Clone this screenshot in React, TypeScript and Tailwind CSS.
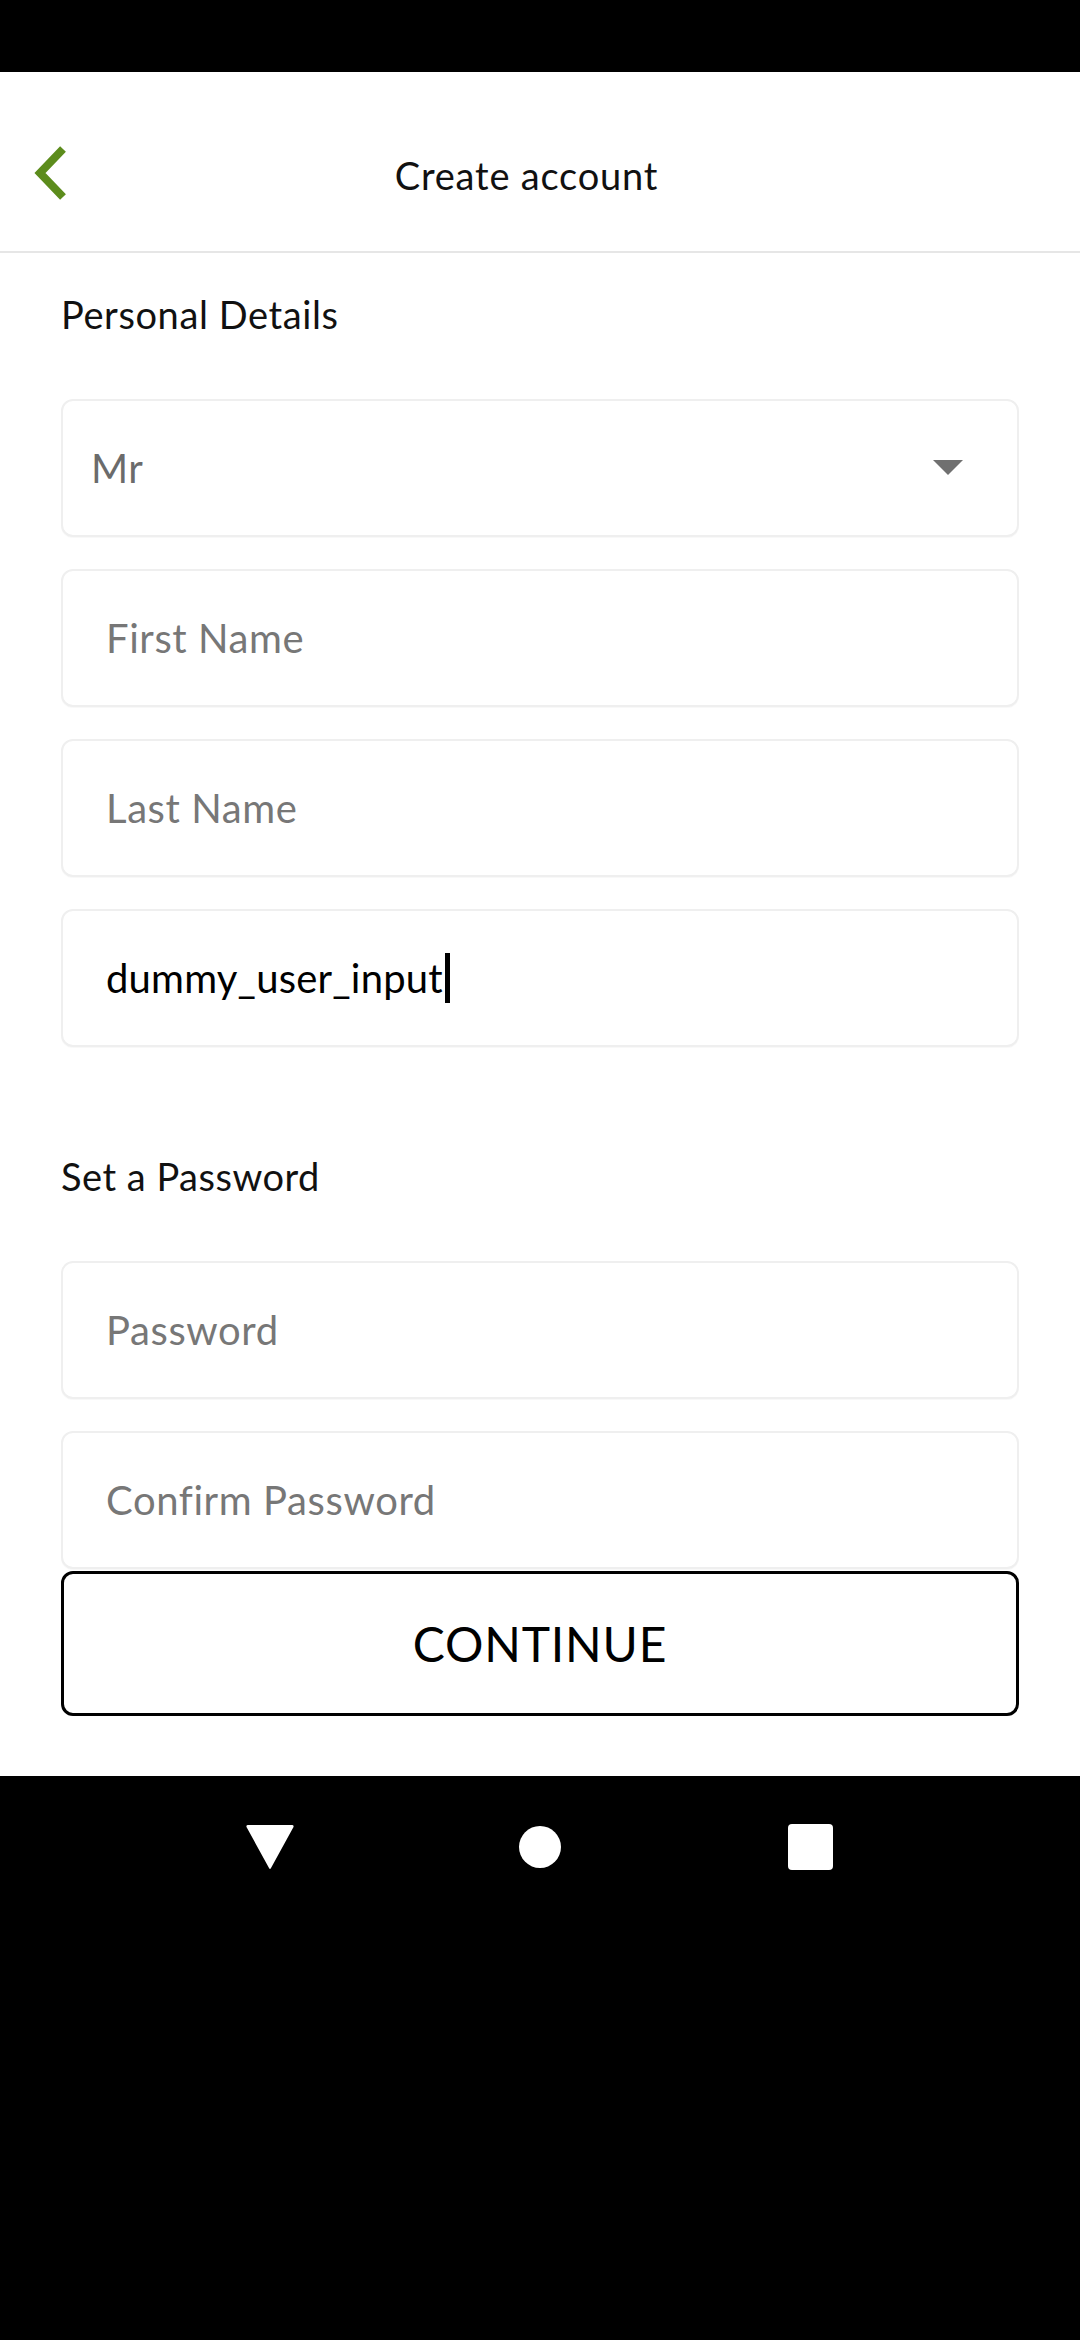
const font = { fontFamily: "Lato, 'Open Sans', sans-serif" };

function Field({ label, value, select }: { label?: string; value?: string; select?: boolean }) {
  return (
    <div className="flex h-[138px] items-center rounded-[12px] border-2 border-[#efefef] bg-white shadow-[0_1px_1px_rgba(0,0,0,0.03)]">
      {select ? (
        <>
          <span className="flex-1 pl-[28px] text-[40px] leading-none tracking-[0.3px] text-[#6b6b6b]">{label}</span>
          <svg width="30" height="16" viewBox="0 0 30 16" className="mr-[54px]">
            <path d="M0 0 L30 0 L15 15 Z" fill="#707070" />
          </svg>
        </>
      ) : value ? (
        <span className="flex items-center pl-[43px] text-[40px] leading-none tracking-[0.2px] text-black">
          {value}
          <span className="ml-[2px] inline-block h-[50px] w-[5px] bg-black" />
        </span>
      ) : (
        <span className="pl-[43px] text-[40px] leading-none tracking-[0.6px] text-[#777777]">{label}</span>
      )}
    </div>
  );
}

export default function App() {
  return (
    <div className="flex h-[2340px] w-[1080px] flex-col bg-black" style={font}>
      <div className="h-[72px] bg-black" />

      <div className="flex h-[181px] items-center border-b-2 border-[#e6e6e6] bg-white pt-[26px]">
        <div className="w-[100px] pl-[30px]">
          <svg width="44" height="60" viewBox="0 0 44 60">
            <polyline
              points="33,4 10,28 33,52"
              fill="none"
              stroke="#5c8c1c"
              strokeWidth="8"
              strokeLinejoin="miter"
            />
          </svg>
        </div>
        <h1 className="flex-1 text-center text-[38px] font-normal leading-none tracking-[0.8px] text-[#111]">
          Create account
        </h1>
        <div className="w-[127px]" />
      </div>

      <div className="flex flex-col bg-white px-[61px]">
        <h2 className="mt-[42px] text-[38px] leading-none tracking-[0.6px] text-[#111]">Personal Details</h2>
        <div className="mt-[66px] flex flex-col gap-[32px]">
          <Field label="Mr" select />
          <Field label="First Name" />
          <Field label="Last Name" />
          <Field value="dummy_user_input" />
        </div>

        <h2 className="mt-[110px] text-[38px] leading-none tracking-[0.5px] text-[#111]">Set a Password</h2>
        <div className="mt-[66px] flex flex-col">
          <Field label="Password" />
          <div className="mt-[32px]">
            <Field label="Confirm Password" />
          </div>
          <button className="mt-[2px] flex h-[145px] items-center justify-center rounded-[12px] border-[3px] border-black bg-white text-[48px] leading-none tracking-[0.8px] text-black">
            CONTINUE
          </button>
        </div>
        <div className="h-[60px]" />
      </div>

      <div className="flex flex-1 justify-center bg-black pt-[47px]">
        <div className="flex h-[48px] w-[270px] items-center justify-center">
          <svg width="50" height="46" viewBox="0 0 50 46">
            <path d="M3 1 L47 1 Q49 1 48.5 3 L26 44 Q25 46 24 44 L1.5 3 Q1 1 3 1 Z" fill="#fff" />
          </svg>
        </div>
        <div className="flex h-[48px] w-[270px] items-center justify-center">
          <div className="h-[42px] w-[42px] rounded-full bg-white" />
        </div>
        <div className="flex h-[48px] w-[270px] items-center justify-center">
          <div className="h-[46px] w-[45px] rounded-[4px] bg-white" />
        </div>
      </div>
    </div>
  );
}
